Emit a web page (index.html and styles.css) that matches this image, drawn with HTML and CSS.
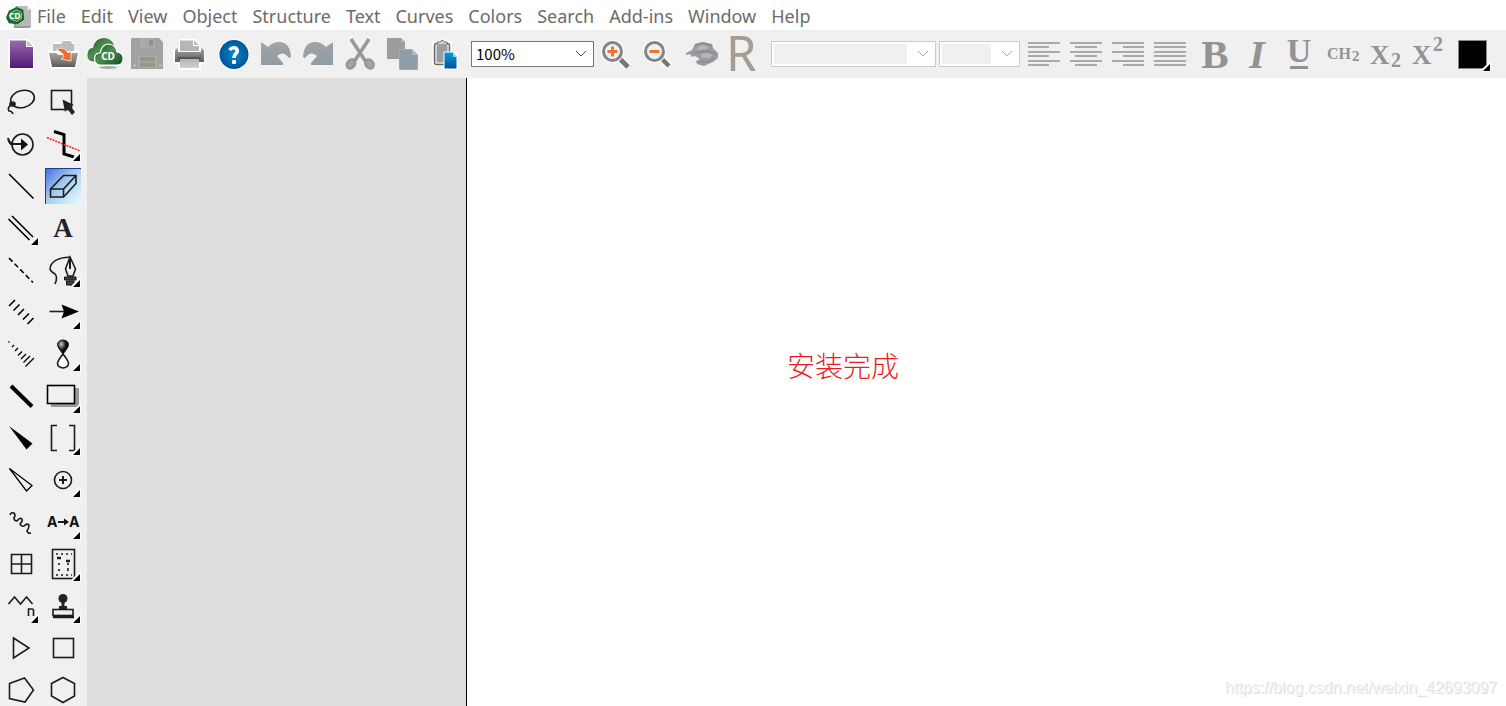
FILE: index.html
```html
<!DOCTYPE html>
<html lang="en">
<head>
<meta charset="utf-8">
<title>ChemDraw</title>
<link rel="stylesheet" href="styles.css">
</head>
<body>
<svg class="defs" aria-hidden="true">
  <defs>
    <linearGradient id="purple" x1="0" y1="0" x2="0" y2="1"><stop offset="0" stop-color="#9a6aaa"/><stop offset="1" stop-color="#521a78"/></linearGradient>
    <linearGradient id="steel" x1="0" y1="0" x2="0" y2="1"><stop offset="0" stop-color="#a4a4a4"/><stop offset="1" stop-color="#5c5c5c"/></linearGradient>
    <linearGradient id="silver" x1="0" y1="0" x2="0" y2="1"><stop offset="0" stop-color="#b2b4b8"/><stop offset="1" stop-color="#d0d0d2"/></linearGradient>
    <linearGradient id="green" x1="0" y1="0" x2="1" y2="1"><stop offset="0" stop-color="#16502a"/><stop offset=".45" stop-color="#4f8e4c"/><stop offset="1" stop-color="#0c4a2a"/></linearGradient>
    <linearGradient id="blue" x1="0" y1="0" x2="0" y2="1"><stop offset="0" stop-color="#0a9ad8"/><stop offset="1" stop-color="#00528f"/></linearGradient>
    <radialGradient id="help"><stop offset="0" stop-color="#078acb"/><stop offset="1" stop-color="#00559b"/></radialGradient>
    <linearGradient id="fade" x1="0" y1="0" x2="0" y2="1"><stop offset="0" stop-color="#a3a3a3"/><stop offset="1" stop-color="#8d9da6"/></linearGradient>
    <radialGradient id="ball" cx=".35" cy=".3" r=".6"><stop offset="0" stop-color="#ccc"/><stop offset=".6" stop-color="#222"/><stop offset="1" stop-color="#000"/></radialGradient>
    <symbol id="corner" viewBox="0 0 42 42"><path d="M30 38.5V36L37 29.500H39V38.500Z" fill="#fff"/><path d="M31 38L38 31V38Z" fill="#000"/></symbol>
  </defs>
</svg>
<div class="app">
  <nav class="menu" aria-label="Main menu">
    <svg class="logo" viewBox="0 0 26 26" aria-hidden="true">
      <path d="M10 2H22L26 6V24L24 25H8Z" fill="#999"/><path d="M11 2H22V6H26V23H10Z" fill="#b9b9b9"/><path d="M22 2L26 6H22Z" fill="#eee"/>
      <path d="M3 7L11 3L18 6L19 16L12 21L3 20L0 14Z" fill="#13682e"/><path d="M5 9L11 6L16 9V15L11 18L5 16Z" fill="#2a8a41" stroke="#8bd18d"/>
      <text x="9" y="16" font-size="9" font-weight="bold" text-anchor="middle" fill="#fff">CD</text>
    </svg>
    <button>File</button><button>Edit</button><button>View</button><button>Object</button><button>Structure</button><button>Text</button><button>Curves</button><button>Colors</button><button>Search</button><button>Add-ins</button><button>Window</button><button>Help</button>
  </nav>

  <div class="toolbar" role="toolbar" aria-label="Document and style">
    <div class="group">
      <button aria-label="New"><svg viewBox="0 0 42 42"><path d="M8 6H28L34 12V37H8Z" fill="#fff"/><path d="M10 7.500H26V14H33V35H10Z" fill="url(#purple)"/><path d="M27 7.500L33 13H27Z" fill="#c4c4c4"/></svg></button>
      <button aria-label="Open"><svg viewBox="0 0 42 42"><path d="M10 17L12 9H19L21 7H28L32 10V17H38L34 36H9L5 17Z" fill="#fff"/><path d="M11 18V11H19L21 8H29L30 11H32V18Z" fill="#bbbdc0"/><path d="M7 20H14L17 22H26L30 20H36L33 34H10Z" fill="url(#steel)"/><path d="M14 17Q22 12 26 20L29 18V28L19 26L22 23.500Q20 18 14 17Z" fill="#ee6b2c" stroke="#fff" stroke-width=".7"/></svg></button>
      <button aria-label="Open from cloud"><svg viewBox="0 0 42 42"><ellipse cx="24" cy="34.500" rx="9" ry="1.500" fill="#aaa"/><path d="M7 28Q2 26 4 19Q5 15 9 15Q11 5 20 5Q27 5 30 12L20 30Z" fill="url(#green)"/><path d="M15 32Q9 30 11 23Q12 20 16 20Q18 11 25 11Q32 12 33 19Q40 20 39 27Q38 32 33 32Z" fill="url(#green)" stroke="#fff" stroke-width="1.200"/><text x="24" y="27" font-size="10" font-weight="bold" text-anchor="middle" fill="#fff">CD</text></svg></button>
      <button aria-label="Save" disabled><svg viewBox="0 0 42 42"><path d="M6 5H33L37 9V36H5V6Z" fill="#a0a1a0"/><path d="M14 5H29V15H14Z" fill="#aaa"/><path d="M23 7H27V13H23Z" fill="#929292"/><path d="M12 23H31V35H12Z" fill="#aaa"/><path d="M14 24H29V34H14Z" fill="#909c86"/><path d="M14 29H29" stroke="#aab29f"/><path d="M7 31h3v3H7ZM33 31h3v3H33Z" fill="#b4b4b4"/></svg></button>
      <button aria-label="Print"><svg viewBox="0 0 42 42"><path d="M11 6H28L32 10V16H37V31H33V37H11V31H5V16H11Z" fill="#fff"/><path d="M12 7.500H25V13H31V18H12Z" fill="#b4b7ba"/><path d="M26 7.500L31 12H26Z" fill="#bbb"/><path d="M7 17L10 15V19H33V15L36 17V29H7Z" fill="url(#steel)"/><path d="M10 24H33L32 27H11Z" fill="#555"/><path d="M12 26H31V35H12Z" fill="url(#silver)"/></svg></button>
    </div>
    <div class="group">
      <button aria-label="Help"><svg viewBox="0 0 42 42"><circle cx="21" cy="21.500" r="15.500" fill="#fff"/><circle cx="21" cy="21.500" r="14.500" fill="url(#help)"/><path d="M16.500 17Q19 14 22.500 15Q25.500 17 23.500 20Q21 22 21 25" fill="none" stroke="#fff" stroke-width="3.500"/><rect x="19" y="27" width="4" height="4" rx="1" fill="#fff"/></svg></button>
      <button aria-label="Undo" disabled><svg viewBox="0 0 42 42"><path d="M6 9L13 14Q18 9 24 9Q35 9 36 24L34 25Q28 17 22 23L28 30V32H6Z" fill="url(#fade)"/></svg></button>
      <button aria-label="Redo" disabled><svg viewBox="0 0 42 42"><path d="M36 9L29 14Q24 9 18 9Q7 9 6 24L8 25Q14 17 20 23L14 30V32H36Z" fill="url(#fade)"/></svg></button>
      <button aria-label="Cut" disabled><svg viewBox="0 0 42 42"><path d="M12 6L27 29M30 6L15 29" stroke="#999" stroke-width="3.500"/><g fill="#aaa09c" stroke="#949494" stroke-width="2"><ellipse cx="12" cy="31" rx="4" ry="5" transform="rotate(38 12 31)"/><ellipse cx="30.500" cy="31" rx="4" ry="5" transform="rotate(-38 30.500 31)"/></g></svg></button>
      <button aria-label="Copy" disabled><svg viewBox="0 0 42 42"><path d="M6 5H20L24 9V26H6Z" fill="#9c9c9b"/><path d="M20 5L24 9H20Z" fill="#b4b4b4"/><path d="M18.500 16.500H31L36.500 22V36.500H18.500Z" fill="#8e9da7" stroke="#a8a8a8"/><path d="M31 17V22H36Z" fill="#b4bbc0"/></svg></button>
      <button aria-label="Paste"><svg viewBox="0 0 42 42"><path d="M9 8H15L18 6H21L24 8H29V19H33L35 22V37H20V33H9Z" fill="#fff"/><rect x="11.500" y="10.500" width="15" height="21" rx="2" fill="#9b9d9f" stroke="#6b6b6b" stroke-width="1.500"/><rect x="13" y="12" width="12" height="18" fill="none" stroke="#fff"/><path d="M14 12V9H17L19 7L22 9H24V12Z" fill="#ccc" stroke="#777"/><path d="M21 19H30L34 24V36H21Z" fill="url(#blue)" stroke="#fff"/><path d="M30 19V24H34Z" fill="#9bd0ee"/></svg></button>
    </div>
    <div class="combo zoom"><select aria-label="Zoom"><option>100%</option></select><svg viewBox="0 0 12 8"><path d="M1 1L6 6L11 1"/></svg></div>
    <div class="group">
      <button aria-label="Zoom in"><svg viewBox="0 0 42 42"><path d="M25 25L34 34" stroke="#fff" stroke-width="8"/><path d="M24 24L34 34" stroke="#777" stroke-width="5"/><circle cx="18.500" cy="18.500" r="9" fill="#fff" stroke="#fff" stroke-width="5"/><circle cx="18.500" cy="18.500" r="9" fill="#f1f1f1" stroke="#858585" stroke-width="3"/><path d="M13.500 18.500H23.500M18.500 13.500V23.500" stroke="#f07430" stroke-width="3"/></svg></button>
      <button aria-label="Zoom out"><svg viewBox="0 0 42 42"><path d="M25 25L33 33" stroke="#fff" stroke-width="8"/><path d="M24 24L33 33" stroke="#777" stroke-width="4.500"/><circle cx="18.500" cy="18.500" r="9" fill="#fff" stroke="#fff" stroke-width="5"/><circle cx="18.500" cy="18.500" r="9" fill="#f1f1f1" stroke="#858585" stroke-width="3"/><path d="M13.500 18.500H23.500" stroke="#f07430" stroke-width="3"/></svg></button>
      <button aria-label="3D model" disabled><svg viewBox="0 0 42 42"><path d="M8 20L14 17L17 11L24 9L34 11L35 15L40 20V25L35 29L26 33L19 31L18 28L22 26L17 23L14 24L12 21L8 22Z" fill="#9d9aa0"/><path d="M19 15L24 12L31 14L29 16L20 17ZM23 21L31 20L35 22L31 25L24 25Z" fill="#b8b5ba"/><path d="M17 12L26 10L34 13M17 20L29 18L38 21M20 29L30 29L36 25" fill="none" stroke="#8e8a92" stroke-width="1.500"/></svg></button>
      <button aria-label="R group" disabled><svg viewBox="0 0 42 42"><text x="6" y="38" font-size="49" fill="#a89b8f">R</text></svg></button>
    </div>
    <div class="combo font"><select aria-label="Font" disabled></select><svg viewBox="0 0 12 8"><path d="M1 1L6 6L11 1"/></svg></div>
    <div class="combo size"><select aria-label="Size" disabled></select><svg viewBox="0 0 12 8"><path d="M1 1L6 6L11 1"/></svg></div>
    <div class="group align">
      <button aria-label="Align left" disabled><svg viewBox="0 0 42 42"><path d="M5 10H37M5 14H26M5 19H37M5 23H26M5 28H37M5 32H26"/></svg></button>
      <button aria-label="Center" disabled><svg viewBox="0 0 42 42"><path d="M5 10H37M10 14H32M5 19H37M10 23H32M5 28H37M10 32H32"/></svg></button>
      <button aria-label="Align right" disabled><svg viewBox="0 0 42 42"><path d="M5 10H37M16 14H37M5 19H37M16 23H37M5 28H37M16 32H37"/></svg></button>
      <button aria-label="Justify" disabled><svg viewBox="0 0 42 42"><path d="M5 10H37M5 14H37M5 19H37M5 23H37M5 28H37M5 32H37"/></svg></button>
    </div>
    <div class="group style">
      <button class="bold" aria-label="Bold" disabled>B</button>
      <button class="italic" aria-label="Italic" disabled>I</button>
      <button aria-label="Underline" disabled><svg viewBox="0 0 42 42"><text x="21" y="29" font-size="34" text-anchor="middle">U</text><rect x="12" y="33" width="18" height="3"/></svg></button>
    </div>
    <div class="group style">
      <button aria-label="Formula" disabled><svg viewBox="0 0 42 42"><text x="4" y="26" font-size="16">CH</text><text x="29" y="28" font-size="15">2</text></svg></button>
      <button aria-label="Subscript" disabled><svg viewBox="0 0 42 42"><text x="5" y="31" font-size="27">X</text><text x="26" y="34" font-size="20">2</text></svg></button>
      <button aria-label="Superscript" disabled><svg viewBox="0 0 42 42"><text x="5" y="31" font-size="27">X</text><text x="26" y="18" font-size="20">2</text></svg></button>
    </div>
    <div class="group">
      <button aria-label="Color"><svg viewBox="0 0 42 42"><rect x="6.500" y="7.500" width="28" height="28" fill="#000" stroke="#888"/><use href="#corner"/></svg></button>
    </div>
  </div>

  <div class="work">
    <div class="palette" role="toolbar" aria-label="Tools">
      <button aria-label="Lasso"><svg viewBox="0 0 42 42"><ellipse cx="22.500" cy="18" rx="12" ry="8.500" transform="rotate(-14 22.500 18)"/><ellipse cx="12.500" cy="23" rx="2.500" ry="2" fill="#222"/><path d="M11 24Q7 27 9 30Q12 30 13 33"/></svg></button>
      <button aria-label="Marquee"><svg viewBox="0 0 42 42"><rect x="9.500" y="9.500" width="20" height="19"/><path d="M20.500 18.500L32 24L28.500 25.500L33 31L30 34L25.500 28L23 31Z" fill="#222" stroke="none"/></svg></button>
      <button aria-label="Structure perspective"><svg viewBox="0 0 42 42"><circle cx="22.500" cy="21.500" r="10.500"/><path d="M8 15Q9 20 13 21H24" stroke-width="2"/><path d="M13 23Q9 22 8 17" stroke-width="1"/><path d="M21 15.500L28 21.500L21 27.500Z" fill="#111" stroke="none"/></svg></button>
      <button aria-label="Mass fragmentation"><svg viewBox="0 0 42 42"><path d="M12 8.500L22 11.500V31L32 34" stroke="#000" stroke-width="3"/><path d="M5 14.500L38 28" stroke="#f22" stroke-dasharray="2 1"/><use href="#corner"/></svg></button>
      <button aria-label="Solid bond"><svg viewBox="0 0 42 42"><path d="M9 9L33.500 33.500" stroke="#000"/></svg></button>
      <button class="selected" aria-label="Eraser" aria-pressed="true"><svg viewBox="3 3 36 36"><path d="M8.500 24L21.500 10.500H34V18.500L21.500 32H8.500ZM8.500 24H21.500V32M21.500 24L34 10.500"/></svg></button>
      <button aria-label="Multiple bonds"><svg viewBox="0 0 42 42"><path d="M12 9L33 30M8.500 12L29.500 33" stroke="#000"/><use href="#corner"/></svg></button>
      <button class="letter-a" aria-label="Text">A</button>
      <button aria-label="Dashed bond"><svg viewBox="0 0 42 42"><path d="M9 9L33 33.500" stroke="#000" stroke-dasharray="5 3"/></svg></button>
      <button aria-label="Pen"><svg viewBox="0 0 42 42"><path d="M28 8Q9 9 8 20Q9 23 13 25Q16 28 13 35M28 8L23.500 20L26 27H31L33.500 20Z"/><path d="M28 8V20" stroke-width="2"/><path d="M22.500 28H34V31H22.500ZM24.500 32H32V36H24.500Z" fill="#444" stroke="#111" stroke-width="1"/><use href="#corner"/></svg></button>
      <button aria-label="Hashed bond"><svg viewBox="0 0 42 42"><path d="M15 9L9 15M19.500 13.500L13.500 19.500M24 18L18 24M29 22.500L23 28.500M33.500 27L27.500 33" stroke="#000"/></svg></button>
      <button aria-label="Arrow"><svg viewBox="0 0 42 42"><path d="M7.500 20.500H24"/><path d="M19.500 13.500L37 20.500L19.500 27.500L22 20.500Z" fill="#000" stroke="none"/><use href="#corner"/></svg></button>
      <button aria-label="Hashed wedge"><svg viewBox="0 0 42 42"><path d="M9.500 8.500L8.500 9.500M14 12L12 14M18 15L15 18M22 18.500L18 22.500M26 21L21 26M30 23L23.500 29.500M34 25L25.500 33.500" stroke="#000" stroke-width="1.300"/></svg></button>
      <button aria-label="Orbital"><svg viewBox="0 0 42 42"><path d="M21 21C18 17 15.500 14 15.500 11.500A5.500 4.500 0 0 1 26.500 11.500C26.500 14 24 17 21 21Z" fill="url(#ball)" stroke="#111" stroke-width="1"/><path d="M21 21C18 25 15.500 28 15.500 30.500A5.500 4.500 0 0 0 26.500 30.500C26.500 28 24 25 21 21Z" fill="#fff"/><use href="#corner"/></svg></button>
      <button aria-label="Bold bond"><svg viewBox="0 0 42 42"><path d="M11 11L32 31.500" stroke="#000" stroke-width="4"/></svg></button>
      <button aria-label="Drawing elements"><svg viewBox="0 0 42 42"><rect x="9" y="13" width="28" height="19" fill="#999" stroke="none"/><rect x="5.500" y="10.500" width="27" height="18" fill="#f0f0f0" stroke="#000"/><use href="#corner"/></svg></button>
      <button aria-label="Bold wedge"><svg viewBox="0 0 42 42"><path d="M9 9L32.500 26.500L26.500 32.500Z" fill="#000" stroke="none"/></svg></button>
      <button aria-label="Brackets"><svg viewBox="0 0 42 42"><path d="M15 8.500H9.500V33.500H15M27 8.500H32.500V33.500H27"/><use href="#corner"/></svg></button>
      <button aria-label="Hollow wedge"><svg viewBox="0 0 42 42"><path d="M9.500 9.500L32 26.500L26.500 32Z" stroke="#000" stroke-width="1.300"/></svg></button>
      <button aria-label="Chemical symbols"><svg viewBox="0 0 42 42"><circle cx="21" cy="21" r="8.500"/><path d="M17 21H25M21 17V25" stroke-width="2"/><use href="#corner"/></svg></button>
      <button aria-label="Wavy bond"><svg viewBox="0 0 42 42"><path d="M10 14Q11 11 14 12Q16 14 14 17Q14 20 17 20Q20 16 22 18Q23 20 20 23Q21 26 24 25Q27 22 29 24Q29 27 27 30Q28 33 31 32"/></svg></button>
      <button aria-label="Atom map"><svg viewBox="0 0 42 42"><text class="sans" x="5" y="26" font-size="14">A</text><text class="sans" x="27" y="26" font-size="14">A</text><path d="M16 21H24" stroke-width="2"/><path d="M22 17.500L27 21L22 24.500Z" fill="#111" stroke="none"/><use href="#corner"/></svg></button>
      <button aria-label="Table"><svg viewBox="0 0 42 42"><path d="M11.500 11.500H31.500V30.500H11.500ZM21.500 11V31M11.500 21H31.500"/></svg></button>
      <button aria-label="TLC plate"><svg viewBox="0 0 42 42"><rect x="10.500" y="6.500" width="22" height="29"/><path d="M14 11H30M14 32H30" stroke-dasharray="2 3"/><path d="M17 20V22M17 26V28M26 20V22M26 25V28"/><path d="M15 15H19M24 18H28" stroke-width="2.500"/><use href="#corner"/></svg></button>
      <button aria-label="Acyclic chain"><svg viewBox="0 0 42 42"><path d="M8.500 19L14.500 12L20.500 19L26.500 12L32.500 19M28.500 31V24H32Q33.500 24 33.500 26V31"/><use href="#corner"/></svg></button>
      <button aria-label="Template stamp"><svg viewBox="0 0 42 42"><circle cx="21" cy="13.500" r="4.500" fill="#222" stroke="none"/><path d="M19.500 16H22.500V21H25V24H17V21H19.500Z" fill="#222" stroke="none"/><rect x="11" y="24.500" width="20" height="6"/><path d="M11 32H32" stroke-width="2.500"/><use href="#corner"/></svg></button>
      <button aria-label="Play"><svg viewBox="0 0 42 42"><path d="M13.500 11L29 21L13.500 31Z"/></svg></button>
      <button aria-label="Cyclobutane"><svg viewBox="0 0 42 42"><rect x="11.500" y="11.500" width="20" height="19"/></svg></button>
      <button aria-label="Cyclopentane"><svg viewBox="0 0 42 42"><path d="M9.500 14.500L24.500 9L33.500 21L25 33L9.500 29.500Z"/></svg></button>
      <button aria-label="Cyclohexane"><svg viewBox="0 0 42 42"><path d="M21 8.500L32.500 14.500V27L21 33.500L9.500 27V14.500Z"/></svg></button>
    </div>
    <div class="side"></div>
    <main class="canvas">
      <p class="note" lang="zh">安装完成</p>
      <span class="mark">https://blog.csdn.net/weixin_42693097</span>
    </main>
  </div>
</div>
</body>
</html>
```

FILE: styles.css
```css
* { box-sizing: border-box; }
body { margin: 0; font-family: "Noto Sans", sans-serif; background: #fff; }
button { padding: 0; border: 0; background: none; font-family: inherit; font-weight: inherit; color: inherit; }
svg { display: block; }
.defs { position: absolute; width: 0; height: 0; }
.app { display: flex; flex-direction: column; height: 100vh; overflow: hidden; }

.menu { display: flex; align-items: center; gap: 15px; height: 30px; padding: 2px 6px 0; flex: none; color: #6b6b6b; }
.menu button { font-size: 18px; line-height: 28px; white-space: nowrap; }
.menu .logo { width: 25px; height: 25px; margin-right: -9px; flex: none; }

.toolbar { display: flex; align-items: center; height: 48px; flex: none; background: #f0f0f0; }
.group { display: flex; flex: none; margin-right: 3px; }
.group button { width: 42px; height: 42px; }
.group svg { width: 42px; height: 42px; }

.combo { position: relative; flex: none; height: 26px; }
.combo select { display: block; width: 100%; height: 100%; appearance: none; padding: 0 4px; border: 1px solid #767676; border-radius: 0; background: #fff; color: #000; font-family: "Noto Sans CJK SC", "Noto Sans", sans-serif; font-size: 15px; line-height: 22px; }
.combo svg { position: absolute; right: 7px; top: 9px; width: 12px; height: 8px; fill: none; stroke: #444; pointer-events: none; }
.combo select:disabled { border-color: #ccc; opacity: 1; }
.combo select:disabled + svg { stroke: #aaa; }
.zoom { width: 123px; margin-left: 3px; }
.font { width: 165px; margin: 0 3px 0 6px; }
.size { width: 81px; margin-right: 3px; }
.font select { background: linear-gradient(#f0f0f0, #f0f0f0) 2px 2px / 133px 20px no-repeat #fff; }
.size select { background: linear-gradient(#f0f0f0, #f0f0f0) 2px 2px / 49px 20px no-repeat #fff; }

.align path { stroke: #939393; stroke-width: 1.5; }
.style { font-family: "Liberation Serif", serif; font-weight: bold; color: #939393; }
.style text, .style rect { fill: #939393; }
.bold, .italic { font-size: 41px; line-height: 42px; }
.italic { font-style: italic; }

.work { display: flex; flex: 1; min-height: 0; }
.palette { display: grid; grid-template-columns: 42px 42px; grid-auto-rows: 42px; align-content: start; flex: none; padding: 3px 3px 0 0; background: #f0f0f0; }
.palette svg { width: 42px; height: 42px; fill: none; stroke: #1c1c1c; stroke-width: 1.6; }
.palette use { stroke: none; }
.palette .sans { font-family: Inter, sans-serif; font-weight: bold; fill: #111; stroke: none; }
.palette .letter-a { font-family: "Liberation Serif", serif; font-size: 27px; line-height: 42px; font-weight: bold; color: #222; }
.palette .selected { width: 36px; height: 36px; margin: 3px; background: linear-gradient(135deg, #3f68e0, #a3c8ee 45%, #e6ffff); box-shadow: inset 1px 1px #1c3f8c; }
.palette .selected svg { width: 36px; height: 36px; }
.side { width: 380px; flex: none; border-right: 1px solid #000; background: #ddd; }
.canvas { position: relative; flex: 1; padding: 269px 0 0 320px; background: #fff; }
.note { margin: 0; font-family: "Noto Sans CJK SC", sans-serif; font-size: 28px; line-height: 36px; font-weight: 300; color: #ed1c24; }
.mark { position: absolute; right: 9px; bottom: 8px; font-family: "Liberation Sans", sans-serif; font-size: 16px; line-height: 20px; color: #f4f4f4; text-shadow: 1px 1px #dcdcdc; }
```
